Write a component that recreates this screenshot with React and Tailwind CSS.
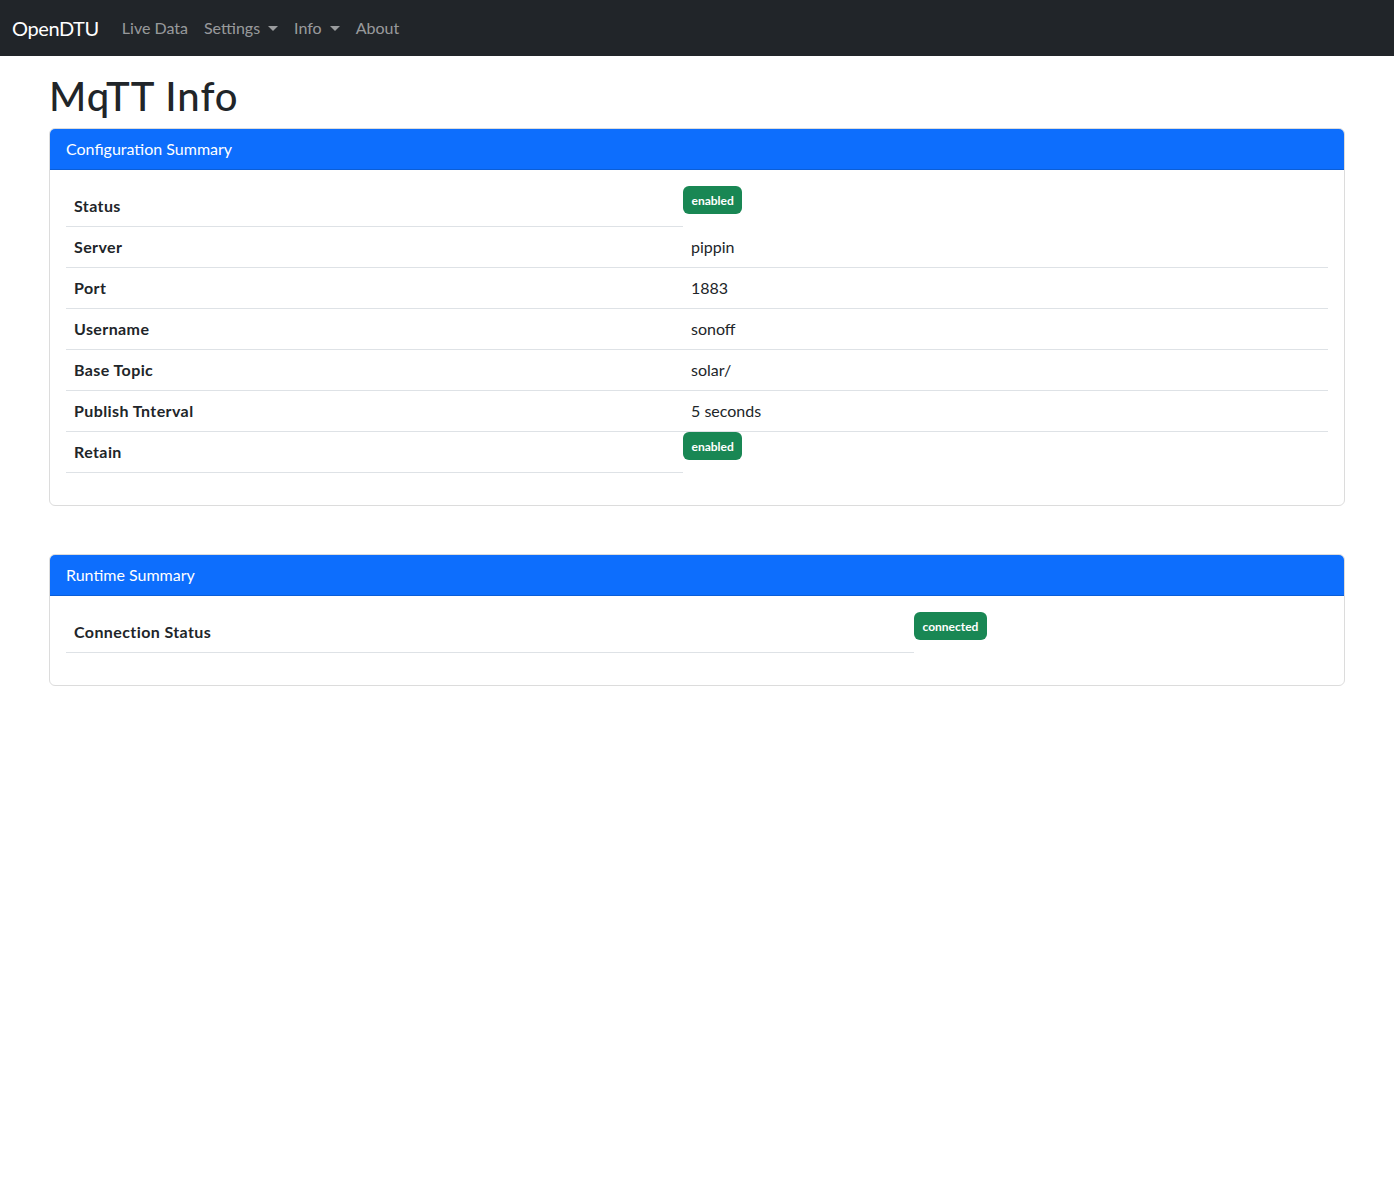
import React from "react";

const font = { fontFamily: 'Lato, "Noto Sans", "Liberation Sans", sans-serif' };

function Caret() {
  return (
    <span className="ml-[8px] inline-block h-0 w-0 border-x-[5px] border-t-[5px] border-x-transparent border-t-current align-[3px]" />
  );
}

function Badge({ children }) {
  return (
    <div className="flex h-[28px] items-center self-start rounded-[6px] bg-[#198754] px-[8.5px] pt-[1px] text-[12px] font-bold leading-none text-white">
      {children}
    </div>
  );
}

function Row({ label, value, badge, labelWidth }) {
  if (badge) {
    return (
      <div className="flex">
        <div
          className="border-b border-[#dee2e6] px-[8px] py-[8px] text-[16px] font-bold leading-[24px] tracking-[0.4px]"
          style={{ width: labelWidth }}
        >
          {label}
        </div>
        <Badge>{value}</Badge>
      </div>
    );
  }
  return (
    <div className="flex border-b border-[#dee2e6]">
      <div
        className="px-[8px] py-[8px] text-[16px] font-bold leading-[24px] tracking-[0.4px]"
        style={{ width: labelWidth }}
      >
        {label}
      </div>
      <div className="px-[8px] py-[8px] text-[16px] leading-[24px]">{value}</div>
    </div>
  );
}

function Card({ title, children, className = "" }) {
  return (
    <div className={"rounded-[6px] border border-[#dcdcdc] " + className}>
      <div className="rounded-t-[5px] border-b border-[#0b5ed7] bg-[#0d6efd] px-[16px] py-[8px] text-[16px] leading-[24px] text-white">
        {title}
      </div>
      <div className="p-[16px] pb-[32px]">{children}</div>
    </div>
  );
}

export default function App() {
  return (
    <div className="min-h-[1200px] bg-white text-[#212529]" style={font}>
      <nav className="flex h-[56px] items-center bg-[#212529] px-[12px]">
        <span className="mr-[15px] text-[20px] leading-[30px] tracking-[-0.4px] text-white">OpenDTU</span>
        <div className="flex items-center text-[16px] leading-[24px] text-[rgba(255,255,255,0.55)]">
          <span className="px-[8px] py-[8px]">Live Data</span>
          <span className="px-[8px] py-[8px]">
            Settings
            <Caret />
          </span>
          <span className="px-[8px] py-[8px]">
            Info
            <Caret />
          </span>
          <span className="px-[8px] py-[8px]">About</span>
        </div>
      </nav>
      <main className="px-[49px] pt-[16px]">
        <h1 className="mb-[8px] text-[40px] font-medium leading-[48px] tracking-[1px]">MqTT Info</h1>
        <Card title="Configuration Summary">
          <Row label="Status" value="enabled" badge labelWidth={617} />
          <Row label="Server" value="pippin" labelWidth={617} />
          <Row label="Port" value="1883" labelWidth={617} />
          <Row label="Username" value="sonoff" labelWidth={617} />
          <Row label="Base Topic" value="solar/" labelWidth={617} />
          <Row label="Publish Tnterval" value="5 seconds" labelWidth={617} />
          <Row label="Retain" value="enabled" badge labelWidth={617} />
        </Card>
        <Card title="Runtime Summary" className="mt-[48px]">
          <Row label="Connection Status" value="connected" badge labelWidth={848} />
        </Card>
      </main>
    </div>
  );
}
